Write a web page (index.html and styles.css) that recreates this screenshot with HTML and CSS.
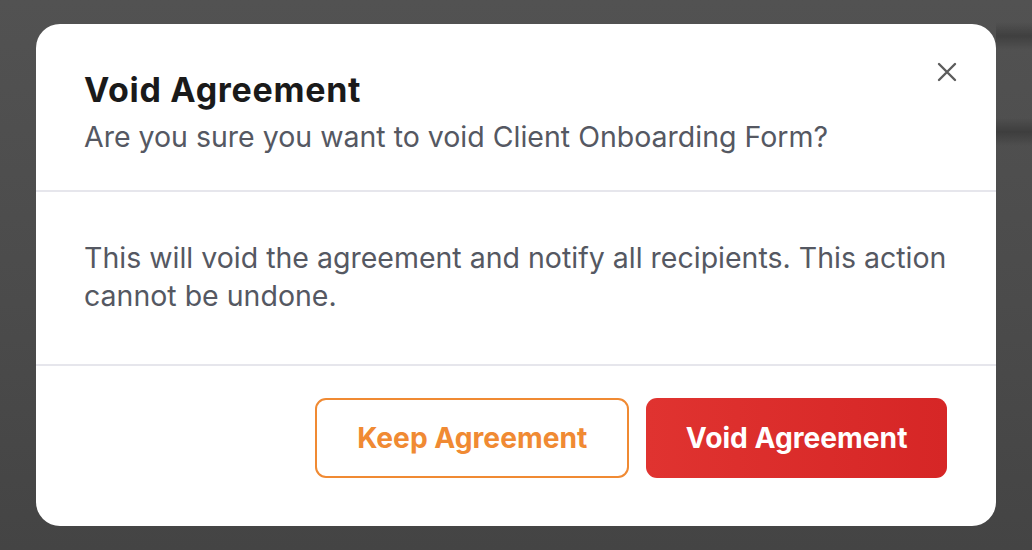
FILE: index.html
```html
<!DOCTYPE html>
<html lang="en">
<head>
<meta charset="utf-8">
<title>Void Agreement</title>
<link rel="stylesheet" href="styles.css">
</head>
<body>
<div class="backdrop">
  <div class="modal" role="dialog" aria-labelledby="dlg-title">
    <button class="close" aria-label="Close">
      <svg viewBox="0 0 20 20" width="20" height="20"><path d="M2 2L18 18M18 2L2 18" stroke="#5c5c5c" stroke-width="2.4" stroke-linecap="round" fill="none"/></svg>
    </button>
    <div class="modal-header">
      <h2 id="dlg-title" class="title">Void Agreement</h2>
      <p class="subtitle">Are you sure you want to void Client Onboarding Form?</p>
    </div>
    <div class="modal-body">
      <p class="message">This will void the agreement and notify all recipients. This action cannot be undone.</p>
    </div>
    <div class="modal-footer">
      <button class="btn btn-outline">Keep Agreement</button>
      <button class="btn btn-danger">Void Agreement</button>
    </div>
  </div>
</div>
</body>
</html>
```
FILE: styles.css
```css
* { box-sizing: border-box; }
html, body { margin: 0; padding: 0; }
body {
  width: 1032px;
  height: 550px;
  overflow: hidden;
  font-family: "Inter", "Noto Sans", sans-serif;
  background:
    linear-gradient(180deg, rgba(0,0,0,0) 22px, rgba(0,0,0,0.22) 36px, rgba(0,0,0,0) 50px,
                    rgba(0,0,0,0) 118px, rgba(0,0,0,0.22) 132px, rgba(0,0,0,0) 146px) right top / 36px 550px no-repeat,
    linear-gradient(180deg, #525252 0%, #4b4b4b 55%, #444444 100%);
}
.backdrop {
  padding: 24px 36px;
  height: 550px;
}
.modal {
  position: relative;
  height: 502px;
  background: #ffffff;
  border-radius: 24px;
  display: flex;
  flex-direction: column;
}
.close {
  position: absolute;
  top: 38px;
  right: 39px;
  width: 20px;
  height: 20px;
  padding: 0;
  border: 0;
  background: none;
  display: flex;
}
.modal-header {
  height: 168px;
  padding: 46px 48px 0;
  border-bottom: 2px solid #e6e6ec;
}
.title {
  margin: 0;
  font-size: 34px;
  line-height: 40px;
  font-weight: 700;
  color: #1a1a1a;
  letter-spacing: 0.7px;
}
.subtitle {
  margin: 9px 0 0;
  font-size: 28.5px;
  line-height: 36px;
  color: #555862;
}
.modal-body {
  height: 174px;
  padding: 47px 48px 0;
  border-bottom: 2px solid #e6e6ec;
}
.message {
  margin: 0;
  font-size: 28.5px;
  line-height: 38px;
  color: #555862;
}
.modal-footer {
  flex: 1;
  display: flex;
  justify-content: flex-end;
  gap: 17px;
  padding: 32px 49px 0 48px;
}
.btn {
  height: 80px;
  padding: 0 40px;
  border-radius: 11px;
  font-family: inherit;
  font-size: 28.2px;
  font-weight: 700;
}
.btn-outline {
  background: #ffffff;
  border: 2px solid #f08a33;
  color: #f08a33;
}
.btn-danger {
  padding: 0 39.5px;
  border: 0;
  color: #ffffff;
  background: linear-gradient(90deg, #e03330 0%, #d62626 100%);
}
```
